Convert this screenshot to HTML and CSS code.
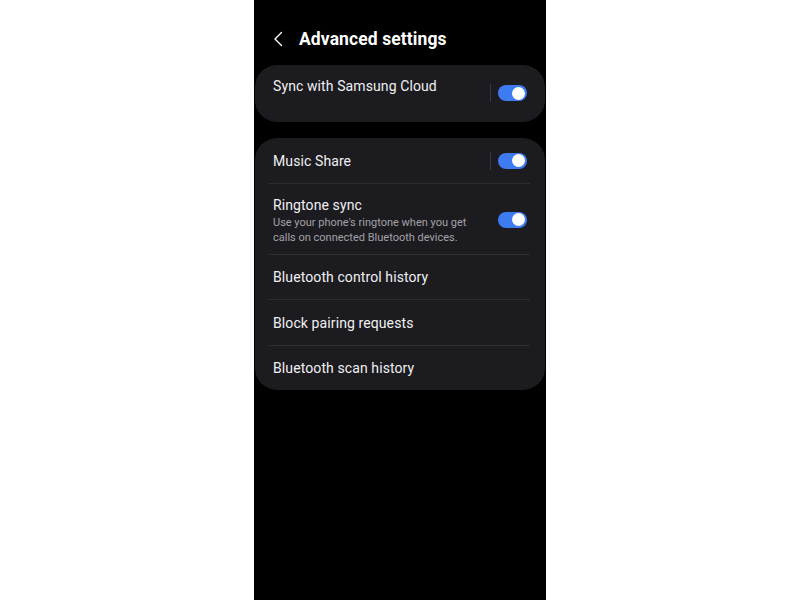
FILE: index.html
```html
<!DOCTYPE html>
<html lang="en">
<head>
    <meta charset="UTF-8">
    <meta name="viewport" content="width=device-width, initial-scale=1.0">
    <title>Advanced settings</title>
    <link rel="stylesheet" href="styles.css">
</head>
<body>
    <div class="phone">
        <div class="header">
            <svg class="back" width="10" height="16" viewBox="0 0 10 16">
                <path d="M8.5 1.5 L2 8 L8.5 14.5" fill="none" stroke="#fff" stroke-width="1.4" stroke-linecap="round" stroke-linejoin="round"/>
            </svg>
            <h1>Advanced settings</h1>
        </div>

        <div class="card card-sync">
            <div class="sync-row">
                <span class="item-title">Sync with Samsung Cloud</span>
                <div class="switch-grp">
                    <span class="vline"></span>
                    <span class="switch"></span>
                </div>
            </div>
        </div>

        <div class="card">
            <div class="list">
                <div class="item">
                    <span class="item-title">Music Share</span>
                    <div class="switch-grp">
                        <span class="vline"></span>
                        <span class="switch"></span>
                    </div>
                </div>
                <div class="item item-tall">
                    <div class="item-text">
                        <span class="item-title">Ringtone sync</span>
                        <span class="item-sub">Use your phone's ringtone when you get calls on connected Bluetooth devices.</span>
                    </div>
                    <span class="switch"></span>
                </div>
                <div class="item">
                    <span class="item-title">Bluetooth control history</span>
                </div>
                <div class="item item-mid">
                    <span class="item-title">Block pairing requests</span>
                </div>
                <div class="item">
                    <span class="item-title">Bluetooth scan history</span>
                </div>
            </div>
        </div>
    </div>
</body>
</html>
```

FILE: styles.css
```css
body {
    margin: 0;
    background: #fff;
    font-family: Roboto, "Noto Sans", sans-serif;
}
.phone {
    width: 292px;
    height: 600px;
    margin: 0 auto;
    background: #000;
    color: #f0f0f2;
}
.header {
    height: 65px;
    box-sizing: border-box;
    padding: 28px 0 0 19px;
    display: flex;
    align-items: flex-start;
}
.back {
    margin-top: 3px;
    margin-right: 16px;
}
h1 {
    margin: 0;
    font-size: 17.5px;
    line-height: 22px;
    font-weight: 700;
    letter-spacing: 0.1px;
    color: #fff;
}
.card {
    margin: 0 1px 16px;
    background: #1c1b20;
    border-radius: 22px;
}
.card-sync {
    height: 57px;
}
.sync-row {
    display: flex;
    justify-content: space-between;
    align-items: flex-start;
    padding: 11px 18px 0 18px;
}
.sync-row .switch-grp {
    margin-top: 8px;
}
.item-title {
    font-size: 14px;
    line-height: 20px;
    letter-spacing: 0.1px;
}
.switch-grp {
    display: flex;
    align-items: center;
}
.vline {
    width: 1px;
    height: 18px;
    background: #38373d;
    margin-right: 7px;
}
.switch {
    position: relative;
    width: 29px;
    height: 16px;
    border-radius: 8px;
    background: #3e7bf0;
    flex-shrink: 0;
}
.switch::after {
    content: '';
    position: absolute;
    top: 1.5px;
    right: 2px;
    width: 13px;
    height: 13px;
    border-radius: 50%;
    background: #fff;
}
.list {
    padding: 0 15px 0 14px;
}
.item {
    height: 45px;
    box-sizing: border-box;
    padding: 0 3px 0 4px;
    display: flex;
    align-items: center;
    justify-content: space-between;
    border-top: 1px solid #2d2c31;
}
.item:first-child {
    border-top: none;
}
.item-tall {
    height: 71px;
    padding-top: 1px;
}
.item-mid {
    height: 46px;
}
.item-text {
    display: flex;
    flex-direction: column;
    width: 205px;
}
.item-sub {
    font-size: 11px;
    line-height: 15px;
    color: #a3a2a8;
}
```
